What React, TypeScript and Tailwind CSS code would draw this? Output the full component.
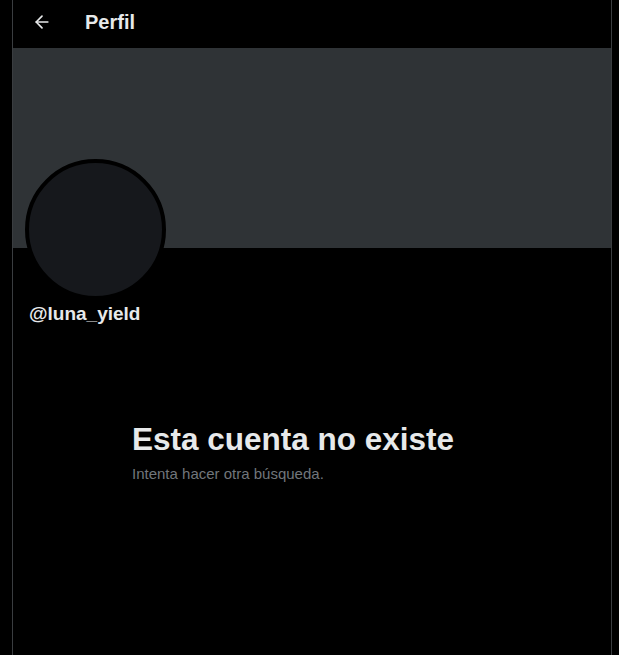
import React from 'react';
import { ArrowLeft } from 'lucide-react';

const App: React.FC = () => {
  return (
    <div className="min-h-[655px] w-full bg-black font-['Liberation_Sans',Arial,sans-serif]">
      <div className="ml-[12px] flex min-h-[655px] w-[600px] flex-col border-x border-[#3a3d40]">
        <header className="flex h-[48px] items-center pb-[4px]">
          <div className="flex w-[58px] justify-center">
            <ArrowLeft className="h-[20px] w-[20px] text-[#e7e9ea]" strokeWidth={2} />
          </div>
          <h1 className="pl-[14px] text-[20px] font-bold leading-[24px] text-[#e7e9ea]">Perfil</h1>
        </header>

        <div className="h-[200px] bg-[#2f3336]" />

        <div className="px-[12px]">
          <div className="-mt-[89px] h-[141px] w-[141px] rounded-full border-[4px] border-black bg-[#16181c]" />
          <div className="mt-[4px] pl-[4px] text-[19px] font-bold leading-[20px] text-[#e7e9ea]">@luna_yield</div>
        </div>

        <div className="mt-[97px] pl-[119px]">
          <h2 className="text-[31.5px] font-bold leading-[36px] text-[#e7e9ea]">Esta cuenta no existe</h2>
          <p className="mt-[7px] text-[15px] leading-[20px] text-[#71767b]">Intenta hacer otra búsqueda.</p>
        </div>
      </div>
    </div>
  );
};

export default App;
